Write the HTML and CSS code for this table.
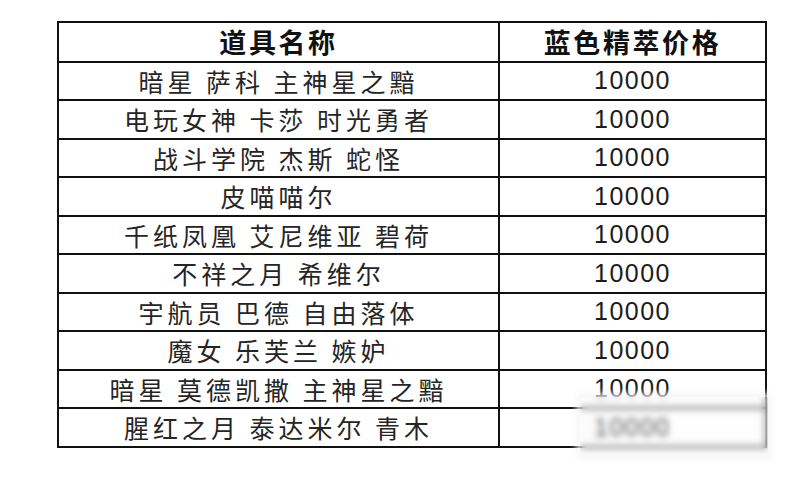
FILE: index.html
```html
<!DOCTYPE html>
<html lang="zh-CN">
<head>
<meta charset="utf-8">
<title>道具价格</title>
<link rel="stylesheet" href="styles.css">
</head>
<body>
<div class="page">
  <div class="sheet">
    <div class="cell head">道具名称</div>
    <div class="cell head">蓝色精萃价格</div>
    <div class="cell name">暗星 萨科 主神星之黯</div>
    <div class="cell num">10000</div>
    <div class="cell name">电玩女神 卡莎 时光勇者</div>
    <div class="cell num">10000</div>
    <div class="cell name">战斗学院 杰斯 蛇怪</div>
    <div class="cell num">10000</div>
    <div class="cell name">皮喵喵尔</div>
    <div class="cell num">10000</div>
    <div class="cell name">千纸凤凰 艾尼维亚 碧荷</div>
    <div class="cell num">10000</div>
    <div class="cell name">不祥之月 希维尔</div>
    <div class="cell num">10000</div>
    <div class="cell name">宇航员 巴德 自由落体</div>
    <div class="cell num">10000</div>
    <div class="cell name">魔女 乐芙兰 嫉妒</div>
    <div class="cell num">10000</div>
    <div class="cell name">暗星 莫德凯撒 主神星之黯</div>
    <div class="cell num">10000</div>
    <div class="cell name">腥红之月 泰达米尔 青木</div>
    <div class="cell num">10000</div>
  </div>
  <div class="watermark"><span class="wm-bar"></span></div>
</div>
</body>
</html>
```

FILE: styles.css
```css
html, body {
  margin: 0;
  padding: 0;
  background: #ffffff;
}

.page {
  position: relative;
  width: 800px;
  height: 477px;
  overflow: hidden;
  padding: 21px 0 0 57px;
  box-sizing: border-box;
}

.sheet {
  display: grid;
  grid-template-columns: 439px 265px;
  grid-template-rows: 37.5px repeat(10, 36.5px);
  gap: 2px;
  padding: 2px;
  background: #111;
  width: max-content;
}

.cell {
  background: #fff;
  display: flex;
  align-items: center;
  justify-content: center;
  white-space: pre;
}

.head {
  font-family: "Noto Sans CJK SC", "Noto Sans", sans-serif;
  font-weight: 700;
  font-size: 27px;
  letter-spacing: 2.6px;
  color: #111;
}

.name {
  font-family: "Noto Sans CJK SC", "Noto Sans", sans-serif;
  font-size: 25px;
  letter-spacing: 4px;
  color: #252525;
}

.num {
  font-family: "Liberation Sans", Arial, sans-serif;
  font-size: 25px;
  letter-spacing: 1.5px;
  color: #1c1c1c;
}

.watermark {
  position: absolute;
  left: 580px;
  top: 397px;
  width: 188px;
  height: 58px;
  background: rgba(242, 242, 242, 0.3);
  backdrop-filter: blur(3px);
  box-shadow: 0 0 6px 4px rgba(245, 245, 245, 0.8);
  display: flex;
  align-items: center;
  padding-left: 92px;
  box-sizing: border-box;
}

.wm-bar {
  width: 84px;
  height: 20px;
  background: rgba(255, 255, 255, 0.8);
  filter: blur(3px);
}
```
